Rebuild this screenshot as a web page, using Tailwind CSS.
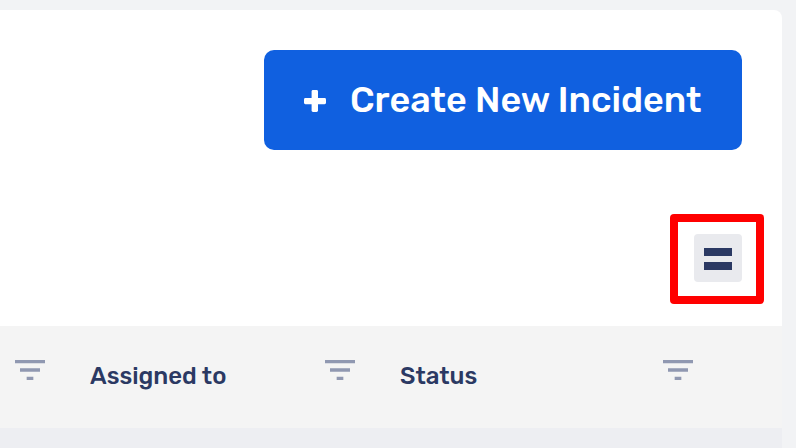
<!DOCTYPE html>
<html lang="en">
<head>
<meta charset="utf-8">
<title>Incidents</title>
<script src="https://cdn.jsdelivr.net/npm/@tailwindcss/browser@4"></script>
</head>
<body class="h-[448px] w-[796px] overflow-hidden bg-[#f2f3f5] pt-[10px] pr-[14px] font-[Rubik,Roboto,sans-serif] font-medium text-[#2b3963]">
<main class="flex h-[438px] w-[782px] flex-col overflow-hidden rounded-tr-[8px] bg-white">
  <section class="flex h-[316px] shrink-0 flex-col items-end pt-10">
    <button class="mr-10 flex h-[100px] w-[478px] items-center rounded-[10px] bg-[#1060e0] pl-10 text-white">
      <svg class="mt-[2px] h-[22px] w-[22px] shrink-0" viewBox="0 0 22 22" fill="currentColor"><rect x="7.6" width="6.4" height="22" rx="1.4"/><rect y="8" width="22" height="6.2" rx="1.4"/></svg>
      <span class="ml-6 text-[36px] leading-[42px] whitespace-nowrap">Create New Incident</span>
    </button>
    <div class="mt-16 mr-[18px] flex h-[90px] w-[94px] items-center justify-center rounded-[4px] bg-[#ff0000]">
      <div class="flex h-[74px] w-[78px] bg-white pt-3 pl-4">
        <button class="flex h-12 w-12 flex-col items-center gap-[6px] rounded-[4px] bg-[#e9eaee] pt-[14px]">
          <span class="h-2 w-7 bg-[#2b3963]"></span>
          <span class="h-2 w-7 bg-[#2b3963]"></span>
        </button>
      </div>
    </div>
  </section>
  <header class="flex h-[102px] shrink-0 items-start bg-[#f4f4f4] pt-[34px] pl-[15px] text-[24px] leading-[32px]">
    <svg class="h-5 w-[30px] shrink-0" viewBox="0 0 30 20" fill="#9098b1"><path d="M0 0h30v3.33H0zM5 8.33h20v3.33H5zM11.67 16.67h6.66V20h-6.66z"/></svg>
    <span class="ml-[45px] w-[235px]">Assigned to</span>
    <svg class="h-5 w-[30px] shrink-0" viewBox="0 0 30 20" fill="#9098b1"><path d="M0 0h30v3.33H0zM5 8.33h20v3.33H5zM11.67 16.67h6.66V20h-6.66z"/></svg>
    <span class="ml-[45px] w-[263px]">Status</span>
    <svg class="h-5 w-[30px] shrink-0" viewBox="0 0 30 20" fill="#9098b1"><path d="M0 0h30v3.33H0zM5 8.33h20v3.33H5zM11.67 16.67h6.66V20h-6.66z"/></svg>
  </header>
  <div class="h-5 shrink-0 bg-[#edeef2]"></div>
</main>
</body>
</html>
